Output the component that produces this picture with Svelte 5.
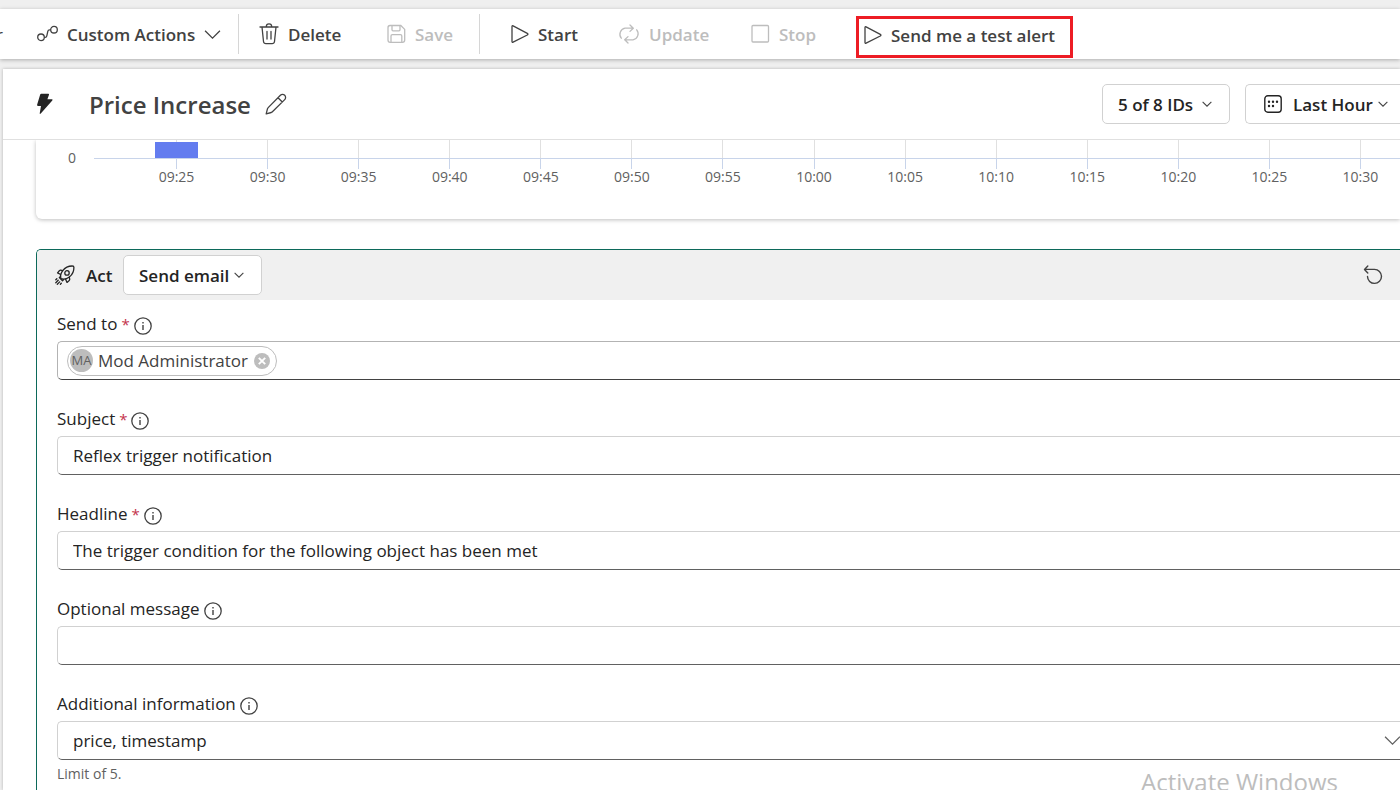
<script lang="ts">
  const ticks = ['09:25', '09:30', '09:35', '09:40', '09:45', '09:50', '09:55', '10:00', '10:05', '10:10', '10:15', '10:20', '10:25', '10:30'];
  let subject = $state('Reflex trigger notification');
  let headline = $state('The trigger condition for the following object has been met');
  let message = $state('');
</script>

{#snippet chevron(size: number)}
  <svg class="chevron" width={size} height={size} viewBox="0 0 16 16" fill="none" stroke="currentColor" aria-hidden="true">
    <path d="M1 4.5l7 7 7-7" stroke-width={size > 12 ? 1.2 : 1.7} />
  </svg>
{/snippet}

{#snippet play()}
  <svg width="18" height="20" viewBox="0 0 18 20" fill="none" stroke="currentColor" stroke-width="1.3" aria-hidden="true">
    <path d="M1 2.6v14.8q0 1.2 1.1.7L16.3 11q1.2-.9 0-1.6L2.1 1.9Q1 1.4 1 2.6z" stroke-linejoin="round" />
  </svg>
{/snippet}

{#snippet info()}
  <svg class="info" width="18" height="18" viewBox="0 0 18 18" fill="none" stroke="#424242" aria-hidden="true">
    <circle cx="9" cy="9" r="8.2" stroke-width="1.3" />
    <path d="M9 8v5M9 5v1.6" stroke-width="1.4" />
  </svg>
{/snippet}

<div class="page">
  <nav class="toolbar" aria-label="Item actions">
    <button class="edge">r</button>
    <button class="tool custom">
      <svg width="21" height="20" viewBox="0 0 21 20" fill="none" stroke="currentColor" stroke-width="1.3" aria-hidden="true">
        <circle cx="4" cy="13.3" r="3.3" /><circle cx="17" cy="5.7" r="3.3" />
        <path d="M7.3 13.3h.9q1.3 0 1.6-1.4l1-4.6q.3-1.5 1.7-1.5h1.1" />
      </svg>
      <span>Custom Actions</span>
      {@render chevron(17)}
    </button>
    <span class="divider"></span>
    <button class="tool delete">
      <svg width="20" height="22" viewBox="0 0 20 22" fill="none" stroke="currentColor" stroke-width="1.3" stroke-linecap="round" aria-hidden="true">
        <path d="M1 4h18M7.3 4V3.500a2.700 2.700 0 0 1 5.400 0V4M3 4l1.500 14.500q.3 2.200 2.400 2.200h6.200q2.100 0 2.400-2.200L17 4M8 8.500v7.500M12 8.500v7.500" />
      </svg>
      <span>Delete</span>
    </button>
    <button class="tool save" disabled>
      <svg width="19" height="20" viewBox="0 0 19 20" fill="none" stroke="currentColor" stroke-width="1.3" aria-hidden="true">
        <path d="M3 1.500h10.800l3.900 3.900V16q0 2.300-2.300 2.300H3.200Q1 18.300 1 16V3.700q0-2.200 2-2.200z" />
        <path d="M5 1.500v4.300q0 1 1 1h6q1 0 1-1V1.500M4 18.300v-6.300q0-1.400 1.400-1.400h8q1.400 0 1.400 1.400v6.300" />
      </svg>
      <span>Save</span>
    </button>
    <span class="divider"></span>
    <button class="tool start">{@render play()} <span>Start</span></button>
    <button class="tool update" disabled>
      <svg width="22" height="20" viewBox="0 0 22 20" fill="none" stroke="currentColor" stroke-width="1.3" stroke-linecap="round" stroke-linejoin="round" aria-hidden="true">
        <path d="M3.300 14.200A6.200 6.200 0 0 1 7 4.200h8M12 1l3.300 3.200L12 7.400" />
        <path d="M18.700 5.800A6.200 6.200 0 0 1 15 15.800H7M10 12.600l-3.300 3.200L10 19" />
      </svg>
      <span>Update</span>
    </button>
    <button class="tool stop" disabled>
      <svg width="19" height="20" viewBox="0 0 19 20" fill="none" stroke="currentColor" stroke-width="1.3" aria-hidden="true">
        <rect x="1" y="1.500" width="16.500" height="16.500" rx="1" />
      </svg>
      <span>Stop</span>
    </button>
    <button class="tool test">{@render play()} <span>Send me a test alert</span></button>
  </nav>

  <main class="panel">
    <header class="heading">
      <svg class="bolt" width="18" height="22" viewBox="0 0 18 22" fill="#242424" aria-hidden="true">
        <path d="M4.200 1.500Q4.500.8 5.300.8h7q1 0 .7 1l-1.600 4.500h4.300q1.500 0 .6 1.200L5 20.300q-1.600 1.500-1.200-.6L5 13H2.200Q.9 13 1.100 11.800z" />
      </svg>
      <h1>Price Increase</h1>
      <button class="icon" aria-label="Rename">
        <svg width="22" height="22" viewBox="0 0 22 22" fill="none" stroke="#424242" stroke-width="1.3" stroke-linejoin="round" aria-hidden="true">
          <path d="M15.400 2.300a3 3 0 0 1 4.300 4.300L7.400 18.800q-.5.500-1.100.7L1.200 20.800l1.300-5.100q.2-.6.700-1.100zM13 4.700L17.300 9" />
        </svg>
      </button>
      <div class="filters">
        <div class="picker ids">
          <select aria-label="Objects"><option>5 of 8 IDs</option></select>
          {@render chevron(10)}
        </div>
        <div class="picker range">
          <svg width="18" height="18" viewBox="0 0 18 18" fill="none" stroke="#242424" aria-hidden="true">
            <rect x=".8" y=".8" width="16.400" height="16.400" rx="3" stroke-width="1.400" />
            <path d="M5 6.800h.01M9 6.800h.01M13 6.800h.01M5 11h.01M9 11h.01" stroke-width="2.400" stroke-linecap="round" />
          </svg>
          <select aria-label="Time range"><option>Last Hour</option></select>
          {@render chevron(10)}
        </div>
      </div>
    </header>

    <section class="chart" aria-label="Event count over time">
      <span class="zero">0</span>
      <div class="plot">
        {#each ticks as time, i}
          <div class="tick">
            <div class="lane">{#if i === 0}<div class="bar"></div>{/if}</div>
            <div class="mark"></div>
            <span>{time}</span>
          </div>
        {/each}
      </div>
    </section>

    <section class="act">
      <div class="act-head">
        <svg width="20" height="20" viewBox="0 0 20 20" fill="none" stroke="#242424" stroke-width="1.300" stroke-linejoin="round" stroke-linecap="round" aria-hidden="true">
          <path d="M6 13.600Q4.600 9.800 7.700 5.600 11.500.8 17.600 1q1.200 0 1.300 1.200.2 6-4.600 9.900-4.200 3.100-8.300 1.500z" />
          <circle cx="12" cy="7.900" r="2.200" />
          <path d="M7.700 5.600L5.800 5.200Q5 5.100 4.400 5.700L2.600 8l3 1.300M14.300 12.100l.4 2q.1.800-.5 1.400L12 17.400l-1.400-3.100M5.500 11.400l-1.200 1.200 3.200 3.200 1.200-1.200M3.200 15.300L.8 17.700M1.800 13.700l-1 1M4.700 16.900l-2.400 2.400M6.300 18.300l-.9.900" />
        </svg>
        <h2>Act</h2>
        <div class="picker action">
          <select aria-label="Action"><option>Send email</option></select>
          {@render chevron(10)}
        </div>
        <button class="icon undo" aria-label="Undo">
          <svg width="20" height="20" viewBox="0 0 20 20" fill="none" stroke="#424242" stroke-width="1.400" stroke-linecap="round" stroke-linejoin="round" aria-hidden="true">
            <path d="M4.800 1L1.500 4.400l3.300 3.500M1.800 4.400h9.700a7 7 0 1 1-7 7.100" />
          </svg>
        </button>
      </div>

      <div class="form">
        <div class="field">
          <label for="to">Send to <i>*</i>{@render info()}</label>
          <div class="box people">
            <span class="chip">
              <span class="avatar">MA</span>
              Mod Administrator
              <button class="icon" aria-label="Remove">
                <svg width="16" height="16" viewBox="0 0 16 16" aria-hidden="true">
                  <circle cx="8" cy="8" r="8" fill="#bdbdbd" />
                  <path d="M4.800 4.800l6.400 6.400M11.200 4.800l-6.400 6.400" stroke="#fff" stroke-width="1.900" />
                </svg>
              </button>
            </span>
            <input id="to" type="text" />
          </div>
        </div>
        <div class="field">
          <label for="subject">Subject <i>*</i>{@render info()}</label>
          <input class="box" id="subject" type="text" bind:value={subject} />
        </div>
        <div class="field">
          <label for="headline">Headline <i>*</i>{@render info()}</label>
          <input class="box" id="headline" type="text" bind:value={headline} />
        </div>
        <div class="field">
          <label for="message">Optional message{@render info()}</label>
          <input class="box" id="message" type="text" bind:value={message} />
        </div>
        <div class="field">
          <label for="extra">Additional information{@render info()}</label>
          <div class="extra">
            <select class="box" id="extra"><option>price, timestamp</option></select>
            {@render chevron(17)}
          </div>
          <p>Limit of 5.</p>
        </div>
      </div>
    </section>
  </main>
  <div class="watermark">Activate Windows</div>
</div>

<style>
  :global(body) { margin: 0; }
  .page {
    position: relative;
    display: flex;
    flex-direction: column;
    height: 100vh;
    overflow: hidden;
    box-sizing: border-box;
    padding-top: 9px;
    background: #efefef;
    color: #242424;
    font: 17px/24px "Open Sans", "Noto Sans", sans-serif;
  }
  .page * { box-sizing: border-box; }
  button, select, input { font: inherit; color: inherit; }
  button { border: 0; padding: 0; background: none; }
  svg { flex: none; display: block; }

  .toolbar {
    display: flex;
    align-items: center;
    flex: none;
    height: 50px;
    background: #fff;
    box-shadow: 0 1px 4px rgba(0, 0, 0, 0.28);
    color: #424242;
  }
  .edge { flex: none; width: 37px; margin-left: -4px; padding-top: 2px; text-align: left; }
  .tool {
    display: flex;
    align-items: center;
    gap: 9px;
    flex: none;
    font-weight: 550;
    white-space: nowrap;
  }
  .tool span { padding-top: 2px; }
  .tool:disabled { color: #bdbdbd; }
  .divider { flex: none; width: 1px; height: 40px; background: #d6d6d6; }
  .custom { width: 201px; margin-left: 4px; }
  .delete { width: 128px; margin-left: 20px; }
  .save { width: 92px; }
  .start { width: 107px; margin-left: 31px; }
  .update { width: 133px; }
  .stop { width: 105px; }
  .test { width: 217px; height: 42px; margin-top: 6px; padding-left: 5px; padding-bottom: 4px; border: 3px solid #ed1c24; }

  .panel {
    display: flex;
    flex-direction: column;
    flex: 1;
    min-height: 0;
    margin: 10px 0 0 3px;
    background: #fff;
    box-shadow: 0 0 3px rgba(0, 0, 0, 0.25);
  }
  .heading {
    display: flex;
    align-items: center;
    flex: none;
    height: 71px;
    padding-left: 33px;
    border-bottom: 1px solid #e0e0e0;
  }
  .bolt { margin-right: 35px; }
  h1 { margin: 0 14px 0 0; padding-top: 2px; font-size: 24px; line-height: 32px; font-weight: 550; color: #424242; }
  .filters { display: flex; gap: 15px; margin-left: auto; }
  .picker {
    display: flex;
    align-items: center;
    height: 40px;
    padding: 0 15px;
    border: 1px solid #d1d1d1;
    border-radius: 5px;
    background: #fff;
    font-weight: 550;
  }
  .picker select {
    flex: 1;
    min-width: 0;
    appearance: none;
    border: 0;
    padding: 2px 0 0;
    background: none;
  }
  .picker .chevron { margin-left: 4px; color: #424242; }
  .ids { width: 128px; padding-right: 17px; }
  .range { width: 155px; padding: 0 12px 0 18px; border-right: 0; border-radius: 5px 0 0 5px; }
  .range select { margin-left: 11px; }
  .action { width: 139px; padding-right: 17px; }

  .chart {
    display: flex;
    flex: none;
    height: 79px;
    margin-left: 33px;
    padding-left: 59px;
    border-radius: 0 0 0 6px;
    box-shadow: 0 1px 4px rgba(0, 0, 0, 0.26);
    clip-path: inset(0 0 -8px -8px);
    font-size: 14px;
    line-height: 16px;
    color: #616161;
  }
  .zero { width: 18px; margin: 10px 0 0 -27px; }
  .plot {
    display: grid;
    grid-template-columns: repeat(14, 1fr);
    flex: 1;
    margin: 0 -6px 0 8px;
    padding-left: 37px;
    height: 19px;
    border-bottom: 1px solid #c8d4ea;
  }
  .tick { display: flex; flex-direction: column; align-items: center; }
  .lane {
    display: flex;
    justify-content: center;
    flex: none;
    width: 1px;
    height: 18px;
    padding-top: 2px;
    background: #e0e0e0;
  }
  .bar { flex: none; width: 43px; background: #637cef; }
  .mark { flex: none; width: 1px; height: 11px; background: #c8d4ea; }

  .act {
    flex: 1;
    margin: 30px 0 0 33px;
    border: solid #0c695a;
    border-width: 1px 0 0 1px;
    border-radius: 5px 0 0 0;
  }
  .act-head {
    display: flex;
    align-items: center;
    height: 50px;
    padding: 0 17px 0 18px;
    border-radius: 4px 0 0 0;
    background: #f0f0f0;
  }
  h2 { width: 37px; margin: 0 0 0 11px; padding-top: 2px; font-size: 17px; line-height: 24px; font-weight: 550; }
  .undo { margin-left: auto; }

  .form { display: grid; gap: 27px; padding: 12px 0 0 20px; }
  label { display: flex; align-items: center; height: 24px; margin-bottom: 5px; }
  label i { margin-left: 4px; font-size: 15px; font-style: normal; color: #c4314b; }
  .info { margin: 3px 0 0 4px; }
  .box {
    display: block;
    width: 100%;
    height: 39px;
    padding: 0 15px;
    border: 1px solid #d1d1d1;
    border-right: 0;
    border-bottom-color: #616161;
    border-radius: 5px 0 0 5px;
    background: #fff;
  }
  .people { display: flex; align-items: center; padding-left: 9px; border-color: #b3b3b3; border-bottom-color: #424242; }
  .people input { flex: 1; border: 0; }
  .chip {
    display: flex;
    align-items: center;
    height: 30px;
    padding: 0 6px 0 2px;
    border: 1px solid #bdbdbd;
    border-radius: 15px;
    color: #424242;
    white-space: nowrap;
  }
  .chip .icon { margin-left: 6px; }
  .avatar {
    width: 23px;
    height: 23px;
    margin-right: 5px;
    border-radius: 50%;
    background: #bdbdbd;
    font-size: 13px;
    line-height: 23px;
    text-align: center;
    color: #616161;
  }
  .extra { display: grid; align-items: center; }
  .extra > :global(*) { grid-area: 1 / 1; }
  .extra select { appearance: none; }
  .extra .chevron { justify-self: end; margin-right: -1px; color: #616161; pointer-events: none; }
  p { margin: 4px 0 0; font-size: 14px; line-height: 20px; color: #616161; }
  .watermark {
    position: absolute;
    right: 62px;
    bottom: -8px;
    font-size: 24px;
    line-height: 32px;
    color: #bdbdbd;
  }
</style>
